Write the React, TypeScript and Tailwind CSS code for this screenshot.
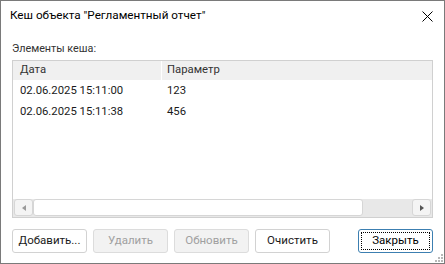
const rows = [
  { date: "02.06.2025 15:11:00", param: "123" },
  { date: "02.06.2025 15:11:38", param: "456" },
];

const Btn = ({
  label,
  disabled,
  className = "",
}: {
  label: string;
  disabled?: boolean;
  className?: string;
}) => (
  <button
    className={
      "h-[24px] w-[75px] rounded-[3px] border text-[11.5px] leading-none " +
      (disabled
        ? "border-[#dcdcdc] bg-[#f2f2f2] text-[#a0a0a0] "
        : "border-[#d2d2d2] bg-white text-[#1a1a1a] ") +
      className
    }
  >
    {label}
  </button>
);

const App = () => {
  return (
    <div
      className="relative flex h-[264px] w-[445px] flex-col border border-[#7a7a7a] bg-white text-[#1a1a1a]"
      style={{ fontFamily: 'Roboto, "Noto Sans", sans-serif' }}
    >
      {/* title bar */}
      <div className="flex h-[30px] shrink-0 items-center justify-between pl-[9px] pr-[11px]">
        <span className="text-[11.7px] text-black">Кеш объекта "Регламентный отчет"</span>
        <svg width="11" height="11" viewBox="0 0 11 11" className="text-black">
          <path d="M0.5 0.5L10.5 10.5M10.5 0.5L0.5 10.5" stroke="currentColor" strokeWidth="1" />
        </svg>
      </div>

      <div className="flex flex-1 flex-col px-[11px] pb-[10px]">
        <div className="mt-[10px] h-[19px] text-[10.8px] leading-[16px] text-[#333]">Элементы кеша:</div>

        {/* list */}
        <div className="flex h-[158px] flex-col border border-[#d0d0d0] bg-white">
          <div className="flex h-[19px] shrink-0 text-[11.3px] text-[#333]">
            <div className="flex w-[148px] items-center bg-[#f0f0f0] pl-[7px]">Дата</div>
            <div className="w-px bg-white" />
            <div className="flex flex-1 items-center bg-[#f0f0f0] pl-[5px]">Параметр</div>
          </div>
          <div className="flex-1 pt-[1px] text-[11.3px] text-[#1a1a1a]">
            {rows.map((r) => (
              <div key={r.date} className="flex h-[21px] items-center">
                <div className="w-[149px] pl-[7px]">{r.date}</div>
                <div className="pl-[5px]">{r.param}</div>
              </div>
            ))}
          </div>
          {/* horizontal scrollbar */}
          <div className="flex h-[18px] shrink-0 items-center bg-[#e8e8e8] px-px pb-px">
            <div className="flex h-[17px] w-[19px] items-center justify-center rounded-[3px] border border-[#d6d6d6] bg-[#f4f4f4]">
              <svg width="4" height="6" viewBox="0 0 4 6">
                <path d="M4 0L0 3L4 6Z" fill="#9a9a9a" />
              </svg>
            </div>
            <div className="h-[17px] w-[330px] rounded-[3px] border border-[#d6d6d6] bg-white" />
            <div className="flex-1" />
            <div className="flex h-[17px] w-[19px] items-center justify-center rounded-[3px] border border-[#d6d6d6] bg-[#f4f4f4]">
              <svg width="4" height="6" viewBox="0 0 4 6">
                <path d="M0 0L4 3L0 6Z" fill="#555" />
              </svg>
            </div>
          </div>
        </div>

        {/* buttons */}
        <div className="mt-[11px] flex items-center gap-[6px]">
          <Btn label="Добавить..." />
          <Btn label="Удалить" disabled />
          <Btn label="Обновить" disabled />
          <Btn label="Очистить" />
          <div className="flex-1" />
          <button className="flex h-[24px] w-[75px] items-center justify-center rounded-[3px] border border-[#3c7fb1] bg-white p-[2px] text-[11.5px] text-black">
            <span className="flex h-full w-full items-center justify-center border border-dotted border-black">
              Закрыть
            </span>
          </button>
        </div>
      </div>

      {/* resize grip */}
      <svg width="10" height="10" viewBox="0 0 10 10" className="absolute bottom-[1px] right-[1px]">
        {[
          [8, 2],
          [5, 5],
          [8, 5],
          [2, 8],
          [5, 8],
          [8, 8],
        ].map(([x, y]) => (
          <rect key={`${x}-${y}`} x={x} y={y} width="2" height="2" fill="#b8b8b8" />
        ))}
      </svg>
    </div>
  );
};

export default App;
